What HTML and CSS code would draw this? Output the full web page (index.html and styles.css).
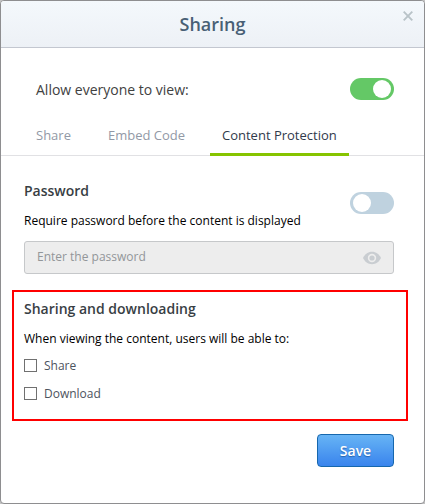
FILE: index.html
```html
<!DOCTYPE html>
<html lang="en">
<head>
<meta charset="utf-8">
<title>Sharing</title>
<link rel="stylesheet" href="styles.css">
</head>
<body>
<main class="dialog">
  <header class="header">
    <h1 class="title">Sharing</h1>
    <button class="close" aria-label="Close"><svg width="10" height="10" viewBox="0 0 10 10"><path d="M.7.7l8.6 8.6M9.3.7L.7 9.3" fill="none" stroke="#b9c3c8" stroke-width="1.9"/></svg></button>
  </header>
  <div class="access">
    <span class="access-label">Allow everyone to view:</span>
    <span class="toggle on"></span>
  </div>
  <nav class="tabs">
    <a class="tab tab-share"><span>Share</span></a>
    <a class="tab tab-embed"><span>Embed Code</span></a>
    <a class="tab active"><span>Content Protection</span></a>
  </nav>
  <section class="password">
    <div class="password-row">
      <div>
        <h2 class="heading">Password</h2>
        <p class="text">Require password before the content is displayed</p>
      </div>
      <span class="toggle"></span>
    </div>
    <div class="input">
      <span class="placeholder">Enter the password</span>
      <svg width="18" height="14" viewBox="0 0 18 14"><path d="M0 7C1.800 3.200 5 .8 9 .8S16.200 3.200 18 7c-1.800 3.800-5 6.200-9 6.200S1.800 10.800 0 7z" fill="#c9cdd1"/><circle cx="9" cy="7" r="3.400" fill="#c9cdd1" stroke="#ededed" stroke-width="1.600"/></svg>
    </div>
  </section>
  <section class="downloads">
    <h2 class="heading">Sharing and downloading</h2>
    <p class="text">When viewing the content, users will be able to:</p>
    <div class="option"><span class="box"></span><span>Share</span></div>
    <div class="option"><span class="box"></span><span>Download</span></div>
  </section>
  <footer class="footer"><button class="save">Save</button></footer>
</main>
</body>
</html>
```

FILE: styles.css
```css
* { box-sizing: border-box; }
body {
  margin: 0;
  background: #c4c4c4;
  font-family: "Open Sans", sans-serif;
}
h1, h2, p { margin: 0; }
.dialog {
  height: 504px;
  border: 1px solid #8e8e90;
  border-radius: 4px;
  background: #fff;
  overflow: hidden;
}
.header {
  position: relative;
  height: 47px;
  border-bottom: 1px solid #c3c7d0;
  background: linear-gradient(#f4f8fc, #edf1f6);
}
.title {
  text-align: center;
  font-size: 18px;
  line-height: 46px;
  font-weight: 600;
  color: #485f75;
}
.close {
  position: absolute;
  top: 10px;
  right: 11px;
  width: 10px;
  height: 10px;
  padding: 0;
  border: 0;
  background: none;
}
.close svg { display: block; }
.access {
  display: flex;
  justify-content: space-between;
  margin: 30px 30px 0 35px;
  height: 22px;
}
.access-label {
  font-size: 14px;
  line-height: 24px;
  color: #414141;
}
.toggle {
  width: 44px;
  height: 22px;
  padding: 2px 3px;
  border-radius: 11px;
  background: #bfd2df;
}
.toggle::before {
  content: "";
  display: block;
  width: 18px;
  height: 18px;
  border-radius: 50%;
  background: #fff;
}
.toggle.on { background: #64c866; }
.toggle.on::before { margin-left: auto; }
.tabs {
  display: flex;
  height: 56px;
  padding-left: 35px;
  border-bottom: 1px solid #e1e1e4;
}
.tab {
  height: 56px;
  padding-top: 26px;
  font-size: 13px;
  line-height: 18px;
  color: #9299a6;
  white-space: nowrap;
}
.tab-share { width: 72px; }
.tab-embed { width: 102px; }
.tab.active {
  width: 139px;
  padding-left: 12px;
  border-bottom: 3px solid #86c400;
  color: #303a4b;
}
.password { padding: 25px 30px 0 23px; }
.password-row {
  display: flex;
  justify-content: space-between;
  height: 60px;
}
.password-row .toggle { margin-top: 11px; }
.heading {
  font-size: 14px;
  line-height: 20px;
  font-weight: 600;
  color: #383e44;
}
.text {
  margin-top: 11px;
  font-size: 12px;
  line-height: 18px;
  color: #000;
  white-space: nowrap;
}
.input {
  display: flex;
  align-items: center;
  justify-content: space-between;
  height: 33px;
  padding: 0 12px;
  border: 1px solid #c6c8ca;
  border-radius: 3px;
  background: #ededed;
  font-size: 12px;
  color: #929699;
}
.placeholder { padding-bottom: 2px; }
.downloads {
  height: 131px;
  margin: 16px 16px 0 11px;
  padding: 7px 10px;
  border: 2px solid #f00;
}
.option {
  display: flex;
  align-items: center;
  gap: 7px;
  height: 18px;
  margin-top: 10px;
  font-size: 12px;
  color: #4d535e;
}
.text + .option { margin-top: 8px; }
.box {
  width: 13px;
  height: 13px;
  border: 1px solid #707070;
}
.footer {
  display: flex;
  justify-content: flex-end;
  padding: 13px 30px 0;
}
.save {
  width: 77px;
  height: 33px;
  padding: 0;
  border: 1px solid #1667ad;
  border-radius: 4px;
  background: linear-gradient(#67b4f5, #3984ed);
  font: 600 14px/30px "Open Sans", sans-serif;
  color: #fff;
  text-shadow: 0 1px 1px #2764b0;
}
```
